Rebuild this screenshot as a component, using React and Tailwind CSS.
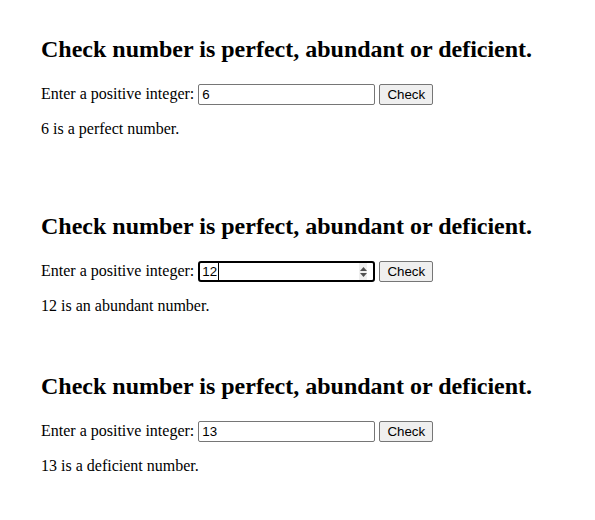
import React from 'react';

const sections = [
  { value: '6', result: '6 is a perfect number.', focused: false, gap: 'mt-0' },
  { value: '12', result: '12 is an abundant number.', focused: true, gap: 'mt-[75px]' },
  { value: '13', result: '13 is a deficient number.', focused: false, gap: 'mt-[58px]' },
];

function NumberField({ value, focused }) {
  if (focused) {
    return (
      <div className="relative box-border flex h-[21px] w-[177px] items-center rounded-[3px] border-2 border-black bg-white pl-[2px] font-['Liberation_Sans',Arial,sans-serif] text-[13.33px] leading-[15px] text-black">
        <span>{value}</span>
        <span className="ml-px h-[17px] w-px bg-black" />
        {/* spin buttons */}
        <div className="absolute top-0 bottom-0 right-[6px] flex w-[8px] flex-col items-center justify-center gap-[2px] bg-[#efefef]">
          <svg width="7" height="4" viewBox="0 0 7 4">
            <path d="M3.5 0 L7 4 L0 4 Z" fill="#505050" />
          </svg>
          <svg width="7" height="4" viewBox="0 0 7 4">
            <path d="M0 0 L7 0 L3.5 4 Z" fill="#505050" />
          </svg>
        </div>
      </div>
    );
  }
  return (
    <div className="box-border flex h-[21px] w-[177px] items-center rounded-[2px] border border-[#767676] bg-white pl-[3px] font-['Liberation_Sans',Arial,sans-serif] text-[13.33px] leading-[15px] text-black">
      {value}
    </div>
  );
}

export default function App() {
  return (
    <div className="min-h-[520px] bg-white pt-[36px] pl-[41px] font-['Liberation_Serif','Times_New_Roman',serif] text-black">
      {sections.map((s) => (
        <div key={s.value} className={s.gap}>
          <h2 className="text-[24px] font-bold leading-[27px]">
            Check number is perfect, abundant or deficient.
          </h2>
          <div className="mt-[21px] flex h-[21px] items-start gap-[4px]">
            <label className="text-[16px] leading-[20px]">Enter a positive integer:</label>
            <NumberField value={s.value} focused={s.focused} />
            <button className="box-border h-[21px] w-[54px] rounded-[2px] border border-[#767676] bg-[#efefef] font-['Liberation_Sans',Arial,sans-serif] text-[13.33px] leading-[15px] text-black">
              Check
            </button>
          </div>
          <p className="mt-[15px] text-[16px] leading-[18px]">{s.result}</p>
        </div>
      ))}
    </div>
  );
}
